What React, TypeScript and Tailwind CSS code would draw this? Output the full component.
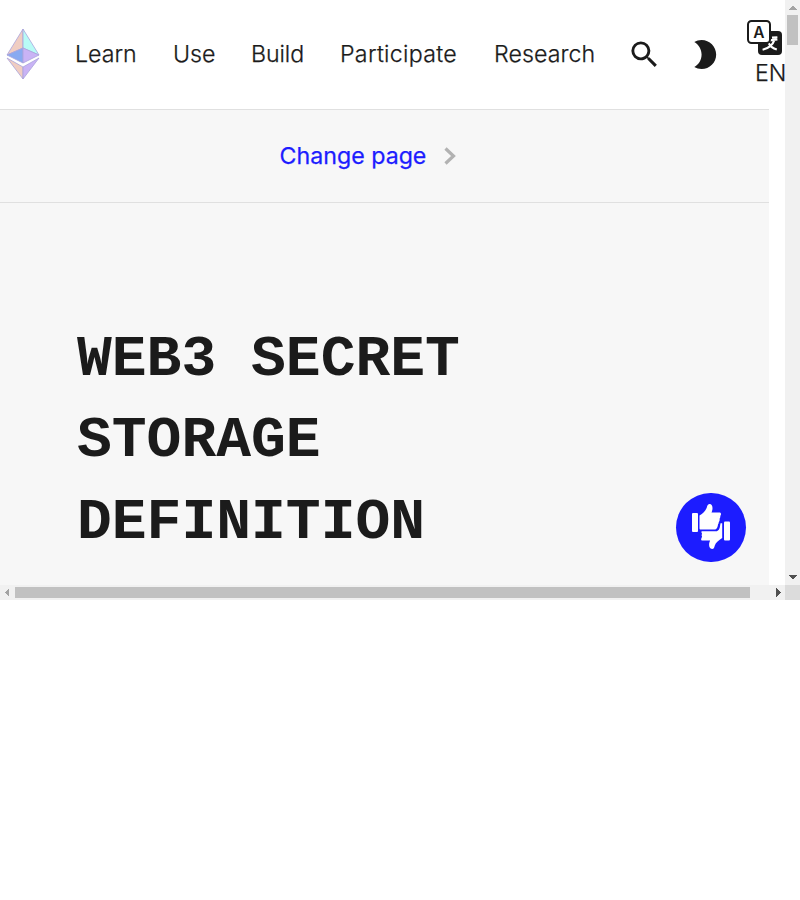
import { MdBrightness2, MdSearch } from "react-icons/md";

const NAV = [
  { label: "Learn", width: "w-[98px]" },
  { label: "Use", width: "w-[78px]" },
  { label: "Build", width: "w-[89px] tracking-[-0.1px]" },
  { label: "Participate", width: "w-[154px] tracking-[0.3px]" },
  { label: "Research", width: "w-[136px] tracking-[0.05px]" },
];

function EthLogo() {
  return (
    <svg className="mb-[2px] ml-[6px] h-[52px] w-[34px] shrink-0" viewBox="0 0 34 52">
      <g stroke="#a9a3dc" strokeWidth=".8" strokeLinejoin="round">
        <path d="M17 1 1 27l16-7z" fill="#f0cdc2" />
        <path d="m17 1 16 26-16-7z" fill="#b8fbf6" />
        <path d="m1 27 16-7v15z" fill="#88aaf1" />
        <path d="m33 27-16-7v15z" fill="#c9b3f5" />
        <path d="m1 30 16 9v12z" fill="#f0cdc2" />
        <path d="m33 30-16 9v12z" fill="#c9b3f5" />
      </g>
    </svg>
  );
}

function LanguageIcon() {
  return (
    <svg className="h-[36px] w-[36px] shrink-0" viewBox="0 0 36 36" fill="none">
      <rect x="11" y="11" width="24" height="24" rx="4" fill="#1b1b1b" />
      <path
        d="M25 17.6l5.4-.4M17.6 21l12.8-1.6M27.6 19.6c-1.8 5.2-5.6 8.6-12 10.2M21.6 23c1.6 3.2 4.2 5.4 8.2 6.6"
        stroke="#fff"
        strokeWidth="2.1"
      />
      <rect x="1" y="1" width="22" height="22" rx="3.5" fill="#fff" stroke="#1b1b1b" strokeWidth="2" />
      <text x="12" y="17.7" textAnchor="middle" fontSize="15.5" fontWeight="600" fill="#1b1b1b" fontFamily="Inter, sans-serif">
        A
      </text>
    </svg>
  );
}

function ThumbsIcon() {
  return (
    <svg className="h-[70px] w-[70px]" viewBox="0 0 70 70" fill="#fff">
      <rect x="16" y="20" width="6" height="19" rx="1" />
      <path d="M23.5 22.5c3.5-2.2 6-4.4 7.3-8 .5-1.8.8-3.3 2.5-3.5 2.3-.2 3.3 2.1 3.2 4.2 0 1.7-.5 3.2-1 4.3h7.8c1.5 0 2 1.1 1.6 2.2-.2.8-.7 1.1-.6 1.8.2.9-.4 1.4-.6 2.1-.2.8.1 1.3-.2 2.1-.2.8-.8 1.1-.8 1.9.1.9-.5 1.3-.7 2-.2 1.9-.9 4.4-2.7 4.9H24.7c-.8 0-1.2-.4-1.2-1.2z" />
      <path d="M25.7 38.3h14.2c2.7 0 3.7-2.5 4.1-5l.5-3h1.7v14.8c-3.5 2.5-6.3 4.3-7.4 7.4-.5 1.8-.8 3.5-2.7 3.5-2.3 0-3-2.3-3-4.2 0-1.8.5-3 1-4.2h-7.3c-1.7 0-1.9-1.3-1.5-2.2.2-.7.7-1.1.8-1.9-.6-.8-.6-2 0-2.8-.7-.7-.9-1.7-.4-2.4z" />
      <rect x="48" y="28.5" width="6" height="19" rx="1" />
    </svg>
  );
}

function Header() {
  return (
    <header className="flex h-[109px] w-[785px] items-center overflow-hidden bg-white">
      <EthLogo />
      <nav className="ml-[35px] flex h-[40px] w-[556px] shrink-0 items-center text-[23.2px] font-light [-webkit-text-stroke:0.25px_#1b1b1b]">
        {NAV.map((n) => (
          <a key={n.label} className={`${n.width} shrink-0`}>
            {n.label}
          </a>
        ))}
      </nav>
      <MdSearch className="-ml-[4px] size-[35px] shrink-0" />
      <MdBrightness2 className="ml-[25px] size-[35px] shrink-0" />
      <div className="ml-[25px] flex h-[69px] w-[48px] shrink-0 flex-col">
        <LanguageIcon />
        <span className="pl-[8px] text-[23.2px] leading-[35px] font-light [-webkit-text-stroke:0.25px_#1b1b1b]">EN</span>
      </div>
    </header>
  );
}

function VerticalScrollbar() {
  return (
    <div className="flex flex-col items-center bg-[#f1f1f1]">
      <svg className="size-[15px]" viewBox="0 0 15 15" shapeRendering="crispEdges">
        <path d="M3 10h9L7.5 5.5z" fill="#a3a3a3" />
      </svg>
      <div className="h-[30px] w-[11px] bg-[#c1c1c1]" />
      <svg className="mt-auto size-[15px]" viewBox="0 0 15 15" shapeRendering="crispEdges">
        <path d="M3 5h9L7.5 9.5z" fill="#505050" />
      </svg>
    </div>
  );
}

function HorizontalScrollbar() {
  return (
    <div className="flex items-center bg-[#f1f1f1]">
      <svg className="size-[15px]" viewBox="0 0 15 15" shapeRendering="crispEdges">
        <path d="M9 3v9L4.5 7.5z" fill="#a3a3a3" />
      </svg>
      <div className="h-[11px] w-[735px] bg-[#c1c1c1]" />
      <svg className="ml-auto size-[15px]" viewBox="0 0 15 15" shapeRendering="crispEdges">
        <path d="M6 3v9l4.5-4.5z" fill="#505050" />
      </svg>
    </div>
  );
}

export default function App() {
  return (
    <div className="h-[900px] w-[800px] overflow-hidden bg-white font-['Inter',sans-serif] text-[#1b1b1b]">
      <div className="grid h-[600px] grid-cols-[785px_15px] grid-rows-[585px_15px]">
        <div className="relative overflow-hidden">
          <Header />
          <main className="h-[476px] w-[769px] bg-[#f7f7f7]">
            <div className="flex h-[94px] items-center justify-center border-y border-[#e0e0e0] pr-[33px]">
              <a className="text-[23.2px] font-normal text-[#1c1cff] [-webkit-text-stroke:0.25px_#1c1cff]">Change page</a>
              <svg className="ml-[18px] h-[18px] w-[12px]" viewBox="0 0 12 18" fill="none" stroke="#b2b2b2" strokeWidth="3.2">
                <path d="m1.5 1.5 8 7.5-8 7.5" />
              </svg>
            </div>
            <h1 className="pt-[116px] pl-[77px] font-['Liberation_Mono',monospace] text-[58px] leading-[81.45px] font-bold uppercase">
              Web3 Secret
              <br />
              Storage
              <br />
              Definition
            </h1>
          </main>
          <button className="absolute top-[493px] left-[676px] h-[69px] w-[70px] rounded-full bg-[#1c1cff]">
            <ThumbsIcon />
          </button>
        </div>
        <VerticalScrollbar />
        <HorizontalScrollbar />
        <div className="bg-[#dcdcdc]" />
      </div>
    </div>
  );
}
